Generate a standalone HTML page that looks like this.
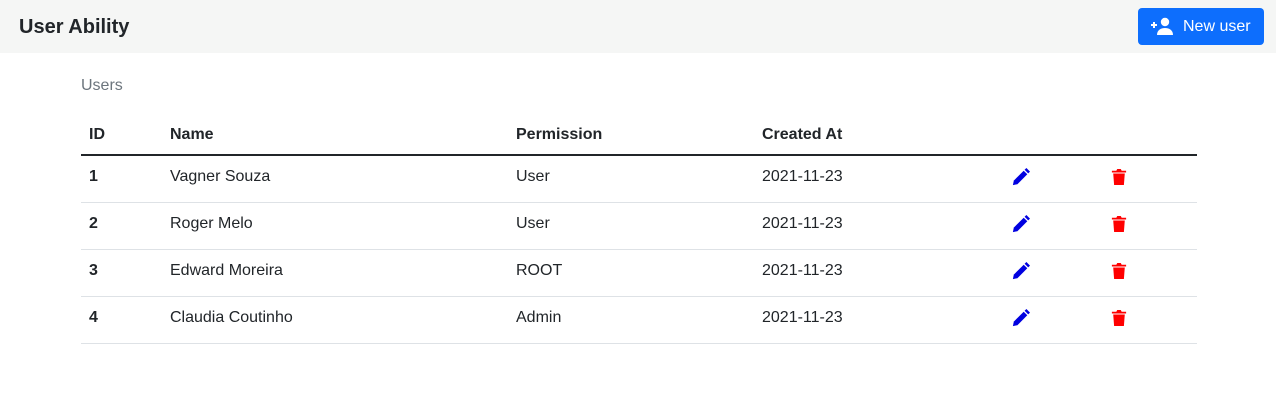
<!DOCTYPE html>
<html><head><style>
*{box-sizing:border-box;margin:0;padding:0}
body{width:1276px;height:418px;background:#fff;font-family:"Liberation Sans",sans-serif;color:#212529;font-size:16px;overflow:hidden}
.nav{height:53px;background:#f5f6f5;position:relative}
.brand{position:absolute;left:19px;top:14px;font-size:20px;font-weight:bold;line-height:26px}
.btn{position:absolute;left:1138px;top:8px;width:126px;height:37px;background:#0d6efd;border-radius:4px;color:#fff;font-size:16px;line-height:37px}
.btn svg{position:absolute;left:13px;top:9px}
.btn span{position:absolute;left:45px}
.cap{position:absolute;left:81px;top:76px;color:#6c757d;font-size:16px;line-height:20px}
table{position:absolute;left:81px;top:112px;width:1116px;border-collapse:collapse;table-layout:fixed}
th{text-align:left;font-weight:bold;height:43px;padding:4px 8px 0;border-bottom:2px solid #212529;vertical-align:middle}
td{height:47px;padding:0 8px 3px;border-bottom:1px solid #dee2e6;vertical-align:middle}
td.b{font-weight:bold}
svg{display:block}
</style></head><body>
<div class="nav"><div class="brand">User Ability</div>
<div class="btn"><svg width="24" height="18" viewBox="0 0 24 18"><path d="M0 8h6M3 5v6" stroke="#fff" stroke-width="2"/><circle cx="14" cy="5" r="4.2" fill="#fff"/><path d="M6 18c0-5 4-7 8-7s8 2 8 7z" fill="#fff"/></svg><span>New user</span></div></div>
<div class="cap">Users</div>
<table>
<colgroup><col style="width:81px"><col style="width:346px"><col style="width:246px"><col style="width:248px"><col style="width:100px"><col style="width:95px"></colgroup>
<tr><th>ID</th><th>Name</th><th>Permission</th><th>Created At</th><th></th><th></th></tr>
<tr><td class="b">1</td><td>Vagner Souza</td><td>User</td><td>2021-11-23</td><td><svg width="18" height="18" viewBox="0 0 20 20" style="margin-left:2px"><path d="M1 19l1-5L13 3l4 4L6 18z" fill="#0000e0"/><path d="M14 2l2-2 4 4-2 2z" fill="#0000e0"/></svg></td><td><svg width="16" height="18" viewBox="0 0 18 20" style="margin-left:1px"><path d="M1 3h5l1-2h4l1 2h5v2H1z" fill="#f00"/><path d="M2.5 6h13l-1 13h-11z" fill="#f00"/></svg></td></tr>
<tr><td class="b">2</td><td>Roger Melo</td><td>User</td><td>2021-11-23</td><td><svg width="18" height="18" viewBox="0 0 20 20" style="margin-left:2px"><path d="M1 19l1-5L13 3l4 4L6 18z" fill="#0000e0"/><path d="M14 2l2-2 4 4-2 2z" fill="#0000e0"/></svg></td><td><svg width="16" height="18" viewBox="0 0 18 20" style="margin-left:1px"><path d="M1 3h5l1-2h4l1 2h5v2H1z" fill="#f00"/><path d="M2.5 6h13l-1 13h-11z" fill="#f00"/></svg></td></tr>
<tr><td class="b">3</td><td>Edward Moreira</td><td>ROOT</td><td>2021-11-23</td><td><svg width="18" height="18" viewBox="0 0 20 20" style="margin-left:2px"><path d="M1 19l1-5L13 3l4 4L6 18z" fill="#0000e0"/><path d="M14 2l2-2 4 4-2 2z" fill="#0000e0"/></svg></td><td><svg width="16" height="18" viewBox="0 0 18 20" style="margin-left:1px"><path d="M1 3h5l1-2h4l1 2h5v2H1z" fill="#f00"/><path d="M2.5 6h13l-1 13h-11z" fill="#f00"/></svg></td></tr>
<tr><td class="b">4</td><td>Claudia Coutinho</td><td>Admin</td><td>2021-11-23</td><td><svg width="18" height="18" viewBox="0 0 20 20" style="margin-left:2px"><path d="M1 19l1-5L13 3l4 4L6 18z" fill="#0000e0"/><path d="M14 2l2-2 4 4-2 2z" fill="#0000e0"/></svg></td><td><svg width="16" height="18" viewBox="0 0 18 20" style="margin-left:1px"><path d="M1 3h5l1-2h4l1 2h5v2H1z" fill="#f00"/><path d="M2.5 6h13l-1 13h-11z" fill="#f00"/></svg></td></tr>
</table>
</body></html>
